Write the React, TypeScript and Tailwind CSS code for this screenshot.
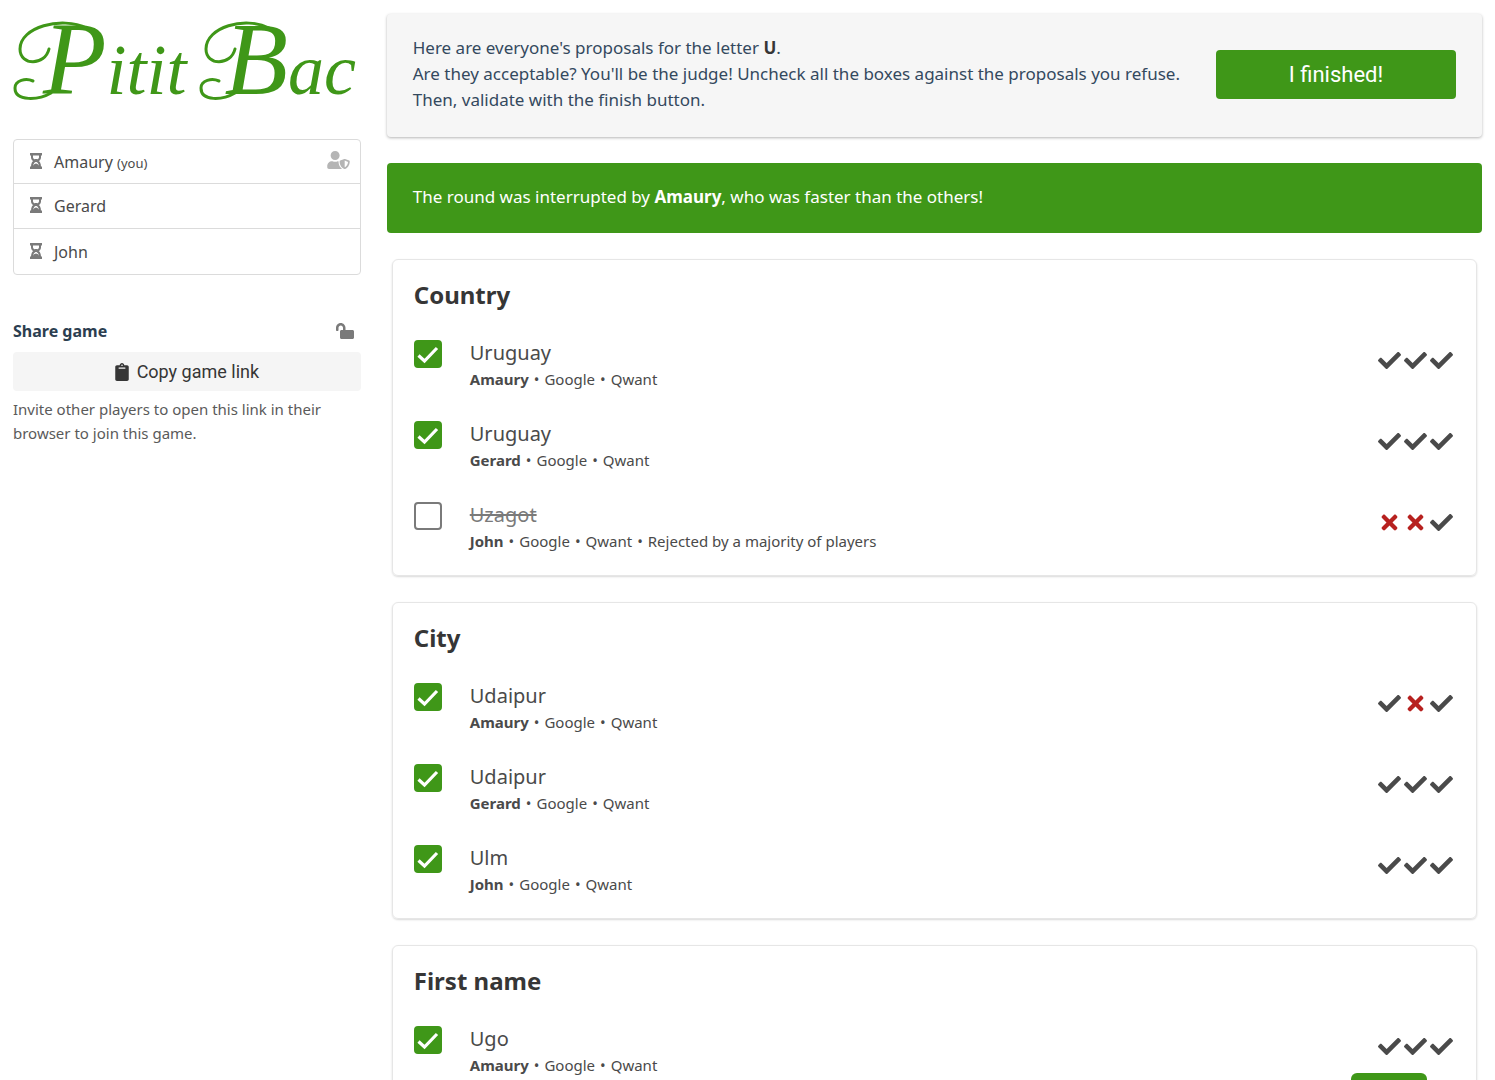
import { useState } from "react";
import {
  FaCheck,
  FaClipboard,
  FaLockOpen,
  FaTimes,
  FaUserShield,
} from "react-icons/fa";

type Answer = {
  text: string;
  author: string;
  accepted: boolean;
  votes: boolean[];
  rejected?: boolean;
};

const players = [
  { name: "Amaury", you: true, master: true },
  { name: "Gerard" },
  { name: "John" },
];

const categories: { name: string; answers: Answer[] }[] = [
  {
    name: "Country",
    answers: [
      { text: "Uruguay", author: "Amaury", accepted: true, votes: [true, true, true] },
      { text: "Uruguay", author: "Gerard", accepted: true, votes: [true, true, true] },
      { text: "Uzagot", author: "John", accepted: false, votes: [false, false, true], rejected: true },
    ],
  },
  {
    name: "City",
    answers: [
      { text: "Udaipur", author: "Amaury", accepted: true, votes: [true, false, true] },
      { text: "Udaipur", author: "Gerard", accepted: true, votes: [true, true, true] },
      { text: "Ulm", author: "John", accepted: true, votes: [true, true, true] },
    ],
  },
  {
    name: "First name",
    answers: [
      { text: "Ugo", author: "Amaury", accepted: true, votes: [true, true, true] },
    ],
  },
];

const Logo = () => (
  <h1 className="relative flex h-[100px] items-baseline whitespace-pre pl-[30px] font-['Liberation_Serif',serif] text-[72px] italic leading-[92px] text-[#3f9718]">
    {/* Flourishes around the capitals */}
    <svg
      viewBox="0 0 347 100"
      className="absolute left-0 top-0 h-[100px] w-[347px]"
      fill="none"
      stroke="currentColor"
      strokeWidth="3"
      strokeLinecap="round"
      aria-hidden="true"
    >
      <path d="M74 15C48 3 7 14 7 36C7 53 32 53 36 36" />
      <path d="M38 80C26 87 2 89 2 75C2 67 13 65 20 68" />
      <path d="M256 15C232 3 193 14 193 36C193 53 218 53 222 36" />
      <path d="M222 80C210 87 188 89 188 75C188 67 199 65 206 68" />
    </svg>
    <span className="text-[104px]">P</span>
    <span>{"itit "}</span>
    <span className="ml-5 text-[104px]">B</span>
    <span>ac</span>
  </h1>
);

const Hourglass = () => (
  <svg
    viewBox="0 0 12 16"
    className="mb-0.5 mr-3 h-4 w-3 text-[#7a7a7a]"
    fill="none"
    stroke="currentColor"
  >
    <path d="M0 1.200h12M0 14.800h12" strokeWidth="2.400" />
    <path d="M2 2v2.500Q2 6.500 5 8Q2 9.500 2 14M10 2v2.500Q10 6.500 7 8Q10 9.500 10 14" strokeWidth="2" />
    <path d="M4 6h4L6 8Z M2.500 14Q3 11 6 10.500Q9 11 9.500 14Z" fill="currentColor" stroke="none" />
  </svg>
);

const Sidebar = () => (
  <aside className="w-1/4 shrink-0 p-[13px]">
    <Logo />

    <ul className="mt-[26px] divide-y divide-[#dbdbdb] rounded border border-[#dbdbdb]">
      {players.map((player) => (
        <li
          key={player.name}
          className="flex h-[45px] items-center pl-4 pr-[10px] text-[#4a4a4a] first:h-11"
        >
          <Hourglass />
          <span>
            {player.name} {player.you && <small className="text-[13px]">(you)</small>}
          </span>
          {player.master && <FaUserShield className="mb-1 ml-auto h-[18px] w-[23px] text-[#b5b5b5]" />}
        </li>
      ))}
    </ul>

    <div className="mt-[43px] flex items-center justify-between pr-[7px]">
      <h2 className="font-bold leading-[26px] text-[#2c3e50]">Share game</h2>
      <button type="button" aria-label="Lock the game">
        <FaLockOpen className="h-4 w-[18px] -scale-x-100 text-[#7a7a7a]" />
      </button>
    </div>
    <button
      type="button"
      className="mt-2 flex h-[39px] w-full items-center justify-center gap-2 rounded bg-[#f5f5f5] font-['Roboto',sans-serif] text-lg text-[#363636]"
    >
      <FaClipboard className="h-[18px] w-[14px]" />
      Copy game link
    </button>
    <p className="mt-[6px] text-[15px] leading-6 text-[#5a5a5a]">
      Invite other players to open this link in their browser to join this game.
    </p>
  </aside>
);

const AnswerRow = ({ answer, id }: { answer: Answer; id: string }) => {
  const [checked, setChecked] = useState(answer.accepted);

  return (
    <li className="flex items-start">
      <span className="relative mt-0.5 size-7 shrink-0">
        <input
          id={id}
          type="checkbox"
          checked={checked}
          onChange={() => setChecked(!checked)}
          className="block size-7 appearance-none rounded border-2 border-[#7a7a7a] checked:border-[#3f9718] checked:bg-[#3f9718]"
        />
        {checked && (
          <svg viewBox="0 0 28 28" className="pointer-events-none absolute inset-0 size-7">
            <path d="M4.500 15.500 10.500 21 23 8" fill="none" stroke="#fff" strokeWidth="3.200" />
          </svg>
        )}
      </span>
      <div className="ml-7 grow">
        <label
          htmlFor={id}
          className={`block text-xl leading-[30px] ${checked ? "text-[#4a4a4a]" : "text-[#7a7a7a] line-through"}`}
        >
          {answer.text}
        </label>
        <p className="flex gap-[5px] text-[15px] leading-[23px] text-[#4a4a4a]">
          <strong>{answer.author}</strong>
          <span>•</span>
          <a href="#google">Google</a>
          <span>•</span>
          <a href="#qwant">Qwant</a>
          {answer.rejected && (
            <>
              <span>•</span>
              <span>Rejected by a majority of players</span>
            </>
          )}
        </p>
      </div>
      <div className="mt-[11px] flex">
        {answer.votes.map((vote, i) => (
          <span key={i} className="flex w-[26px] justify-center">
            {vote ? (
              <FaCheck className="size-[23px] text-[#4a4a4a]" />
            ) : (
              <FaTimes className="size-[23px] text-[#b7211f]" />
            )}
          </span>
        ))}
      </div>
    </li>
  );
};

export default function App() {
  return (
    <div className="flex h-screen overflow-hidden bg-white font-['Noto_Sans',sans-serif] text-base">
      <Sidebar />

      <main className="min-w-0 grow p-[13px] pt-[14px]">
        <header className="flex items-center gap-[26px] rounded bg-[#f6f6f6] px-[26px] pb-6 pt-[21px] shadow-[0_1px_3px_rgba(10,10,10,0.3)]">
          <p className="grow text-[17px] leading-[26px] text-[#34495e]">
            Here are everyone's proposals for the letter <strong className="text-[#363636]">U</strong>.
            <br />
            Are they acceptable? You'll be the judge! Uncheck all the boxes against the proposals you refuse.
            <br />
            Then, validate with the finish button.
          </p>
          <button
            type="button"
            className="h-[49px] w-60 shrink-0 rounded bg-[#3f9718] font-['Roboto',sans-serif] text-[22px] text-white"
          >
            I finished!
          </button>
        </header>

        <p className="mt-[26px] rounded bg-[#3f9718] px-[26px] pb-[23px] pt-[21px] text-[17px] leading-[26px] text-white">
          The round was interrupted by <strong>Amaury</strong>, who was faster than the others!
        </p>

        <div className="mt-[26px] flex flex-col gap-[26px] px-[5px]">
          {categories.map((category) => (
            <section
              key={category.name}
              className="rounded-md border border-[#e6e6e6] pb-[22px] pl-[21px] pr-[22px] pt-5 shadow-[0_1px_2px_rgba(10,10,10,0.15)]"
            >
              <h2 className="text-2xl font-bold leading-[30px] text-[#363636]">{category.name}</h2>
              <ul className="mt-7 flex flex-col gap-7">
                {category.answers.map((answer) => (
                  <AnswerRow
                    key={answer.author}
                    answer={answer}
                    id={`${category.name}-${answer.author}`}
                  />
                ))}
              </ul>
            </section>
          ))}
        </div>
      </main>

      <div className="fixed bottom-0 right-[68px] h-[7px] w-[76px] rounded-t-md bg-[#3f9718]" />
    </div>
  );
}
